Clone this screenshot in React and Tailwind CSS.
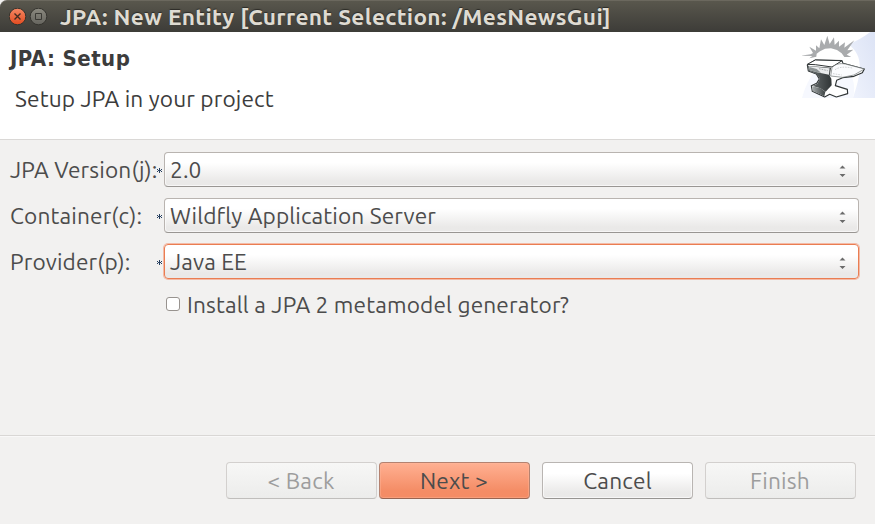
import React from "react";

function Anvil() {
  return (
    <svg className="block h-[66px] w-[73px]" viewBox="51 12 219 198" fill="none">
      <defs>
        <linearGradient id="glow" x1="0" y1="1" x2="1" y2="0">
          <stop offset="0" stopColor="#f1f4fd" />
          <stop offset="1" stopColor="#dce3f5" />
        </linearGradient>
        <linearGradient id="side" x1="0" y1="0" x2="1" y2="0">
          <stop offset="0" stopColor="#6d7374" />
          <stop offset="1" stopColor="#303536" />
        </linearGradient>
        <linearGradient id="foot" x1="0" y1="0" x2="1" y2="0">
          <stop offset="0" stopColor="#a5aaab" />
          <stop offset="1" stopColor="#3b4142" />
        </linearGradient>
      </defs>
      <path d="M100 120C78 140 62 170 51 210H204C215 170 200 130 170 100Z" fill="#f6f8fe" />
      <path d="M270 12H256C232 29 213 40 190 49C227 78 238 112 204 210H270Z" fill="url(#glow)" />
      <path d="M50 83L77 79L84 75L73 56L93 68L93 52L103 61L108 34L118 51L127 23L134 48L147 28L149 51L162 38L162 56L180 43L178 59L208 37L187 67L205 65L185 80L199 87L178 87L170 76L156 66L138 61L120 62L105 70L95 77L94 86L73 91L82 84Z" fill="#a9abad" />
      <path d="M67 111L91 96L171 98L174 106L238 123L232 134L207 145L173 149L155 157L151 173L187 184L188 197L154 207L134 199L119 207L82 190L79 173L95 166L103 153L94 138L70 129Z" fill="#fff" stroke="#303536" strokeWidth="3.5" strokeLinejoin="round" />
      <path d="M68 113L138 119L134 143L139 152L140 172L122 191L106 181L83 174L97 167L105 152L94 138L71 128Z" fill="url(#side)" />
      <path d="M72 115L134 121L132 140L96 133L75 127Z" fill="#e9ebec" />
      <path d="M73 117L95 123L108 134L96 133L75 127Z" fill="#8d9394" />
      <path d="M67 109L91 96L171 98L141 117L91 110Z" fill="#fff" stroke="#303536" strokeWidth="3" />
      <path d="M141 119C150 108 165 105 181 108L238 123L207 141L173 148L137 144Z" fill="#fbfcfe" stroke="#6a6f70" strokeWidth="2" />
      <path d="M150 125C163 116 182 116 202 120M144 137L170 141" stroke="#a4a8ab" strokeWidth="1.5" strokeDasharray="5 3" />
      <path d="M102 122L128 128" stroke="#858a8c" strokeWidth="2" strokeDasharray="5 3" />
      <path d="M82 175L107 181L121 191L118 205L83 189Z" fill="url(#foot)" />
    </svg>
  );
}

function Row({ label, value, focused }) {
  return (
    <div className="flex h-[35px] items-center">
      <div className="w-[146px] shrink-0 whitespace-nowrap">{label}</div>
      <svg className="mr-px mt-[2px] h-[7px] w-[7px] shrink-0" viewBox="0 0 7 7" fill="#263f60" shapeRendering="crispEdges">
        <path d="M3 1H4V6H3ZM2 3H5V4H2ZM1 2H2V3H1ZM5 2H6V3H5ZM1 4H2V5H1ZM5 4H6V5H5Z" />
      </svg>
      <button
        className={
          "flex h-[35px] w-[695px] items-center justify-between rounded-[4px] border bg-linear-to-b from-white from-30% to-[#eae9e8] to-85% pl-[5px] pr-[12px] text-left tracking-[0.12px] " +
          (focused
            ? "border-[#ea7d52] shadow-[0_0_0_1px_#f3bba7]"
            : "border-[#b9b4b0] border-b-[#999693] shadow-[inset_0_0_0_1px_#fff9]")
        }
      >
        <span className="whitespace-nowrap">{value}</span>
        <svg className="mt-[3px] h-[13px] w-[7px]" viewBox="0 0 7 13" fill="#6b6b6b">
          <path d="M3.5 0.5L6.5 3.5H0.5ZM0.5 9H6.5L3.5 12Z" />
        </svg>
      </button>
    </div>
  );
}

function Button({ children, className }) {
  return (
    <button className={"flex h-[37px] w-[151px] items-center justify-center rounded-[4px] border bg-linear-to-b tracking-[0.2px] " + className}>
      <span className="whitespace-nowrap">{children}</span>
    </button>
  );
}

export default function App() {
  return (
    <div className="flex h-[524px] w-[875px] flex-col overflow-hidden bg-[#f2f1f0] font-['Ubuntu','Noto_Sans',sans-serif] text-[22.67px] leading-[30px] tracking-[0.14px] text-[#4c4c4c]">
      <header className="flex h-8 shrink-0 items-center rounded-tl-[7px] border-t border-[#6b685e] bg-linear-to-b from-[#59574d] to-[#3d3c38] pl-[9px] pt-px">
        <svg className="h-[18px] w-[39px]" viewBox="0 0 39 18" fill="none">
          <defs>
            <linearGradient id="close" x1="0" y1="0" x2="0" y2="1">
              <stop stopColor="#f58863" />
              <stop offset="1" stopColor="#e24b20" />
            </linearGradient>
            <linearGradient id="maximize" x1="0" y1="0" x2="0" y2="1">
              <stop stopColor="#8b897f" />
              <stop offset="1" stopColor="#65645e" />
            </linearGradient>
          </defs>
          <circle cx="8.5" cy="8.5" r="8.3" fill="url(#close)" stroke="#35332d" />
          <path d="M5.5 5.5L11.5 11.5M11.5 5.5L5.5 11.5" stroke="#442c20" strokeWidth="1.4" />
          <circle cx="29.5" cy="8.5" r="8.3" fill="url(#maximize)" stroke="#35342f" />
          <path d="M26.5 5.5H32.5V11.5H26.5Z" stroke="#3b3a35" />
        </svg>
        <h1 className="ml-[12px] whitespace-nowrap font-bold tracking-[0.32px] text-[#dfdbd2] [text-shadow:0_-1px_1px_#2c2b27]">
          JPA: New Entity [Current Selection: /MesNewsGui]
        </h1>
      </header>
      <section className="flex h-[108px] shrink-0 justify-between border-b border-[#dad8d6] bg-white">
        <div className="pl-[10px] pt-[12px] text-[#3c3c3c]">
          <h2 className="whitespace-nowrap font-['DejaVu_Sans_Condensed','DejaVu_Sans',sans-serif] text-[22px] font-bold font-stretch-condensed tracking-[0.45px]">
            JPA: Setup
          </h2>
          <p className="ml-[5px] mt-[10px] whitespace-nowrap">Setup JPA in your project</p>
        </div>
        <Anvil />
      </section>
      <main className="flex h-[295px] shrink-0 flex-col gap-[11px] pl-[10px] pt-[12px]">
        <Row label="JPA Version(j):" value="2.0" />
        <Row label="Container(c):" value="Wildfly Application Server" />
        <Row label="Provider(p):" value="Java EE" focused />
        <label className="flex h-[30px] items-center pl-[156px]">
          <span className="mb-[2px] h-[14px] w-[14px] rounded-[3px] border border-[#98938f] bg-white" />
          <span className="ml-[7px] whitespace-nowrap">Install a JPA 2 metamodel generator?</span>
        </label>
      </main>
      <footer className="flex h-[89px] shrink-0 border-t border-[#d9d7d5] pl-[226px] pt-[26px] shadow-[inset_0_1px_#f9f8f8]">
        <Button className="border-[#d3d0ce] border-b-[#c0bebc] from-[#f7f7f6] to-[#ececeb] pr-px text-[#9d9d9d]">&lt; Back</Button>
        <Button className="ml-[2px] border-[#b48270] border-b-[#976451] from-[#ffb092] to-[#f48c65] to-80% pr-px shadow-[inset_0_0_0_1px_#ffb99e66]">Next &gt;</Button>
        <Button className="ml-[12px] border-[#b9b5b2] border-b-[#979491] from-white from-30% to-[#eae9e8] to-85% shadow-[inset_0_0_0_1px_#fff9]">Cancel</Button>
        <Button className="ml-[12px] border-[#d3d0ce] border-b-[#c0bebc] from-[#f7f7f6] to-[#ececeb] pr-px text-[#9d9d9d]">Finish</Button>
      </footer>
    </div>
  );
}
